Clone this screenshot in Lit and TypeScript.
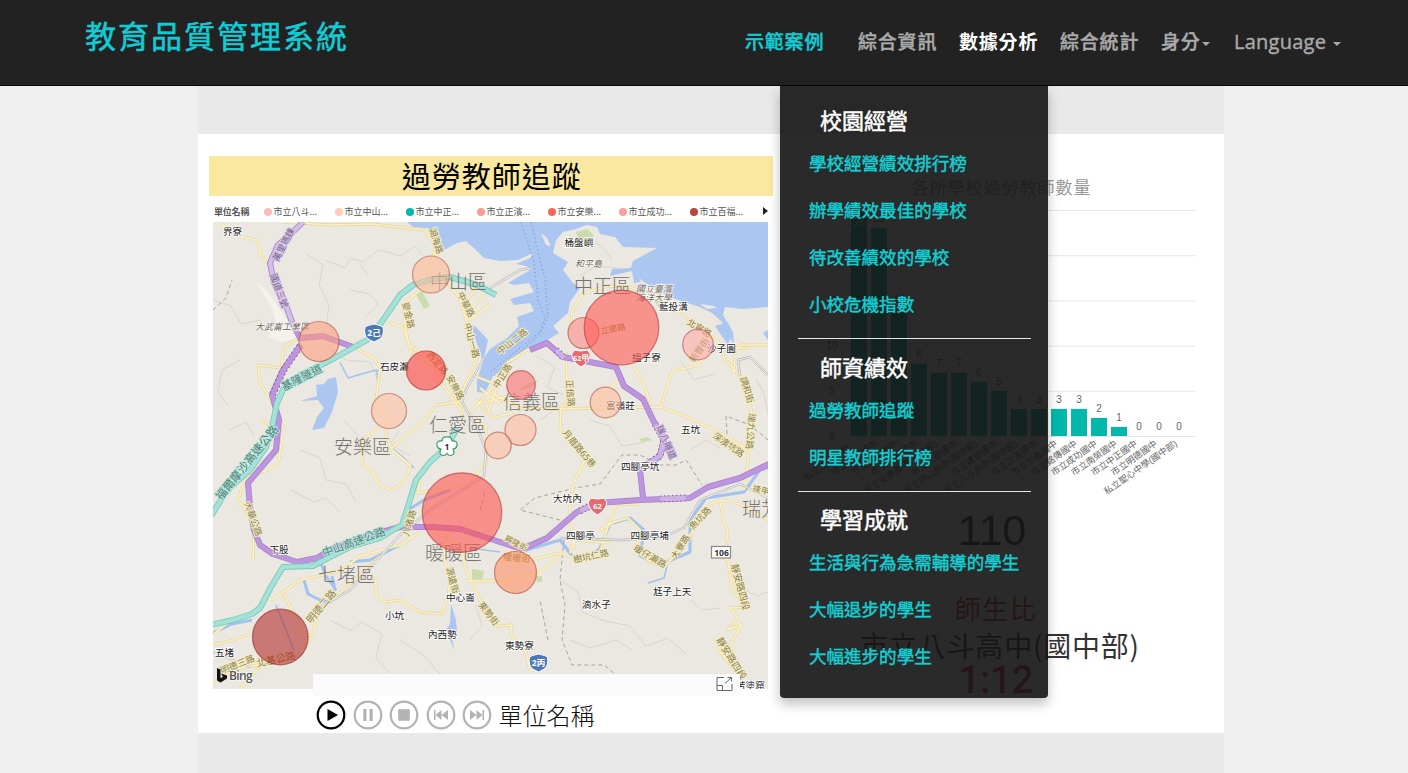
import { LitElement, html, svg, css } from "lit";
import { customElement } from "lit/decorators.js";

const legend: [string, string][] = [
  ["市立八斗", "#fbbcb9"],
  ["市立中山", "#fdcdb5"],
  ["市立中正", "#01b8aa"],
  ["市立正濱", "#f99c98"],
  ["市立安樂", "#fd625e"],
  ["市立成功", "#fba09c"],
  ["市立百福", "#b84540"],
];

const menu: { title: string; items: string[] }[] = [
  { title: "校園經營", items: ["學校經營績效排行榜", "辦學績效最佳的學校", "待改善績效的學校", "小校危機指數"] },
  { title: "師資績效", items: ["過勞教師追蹤", "明星教師排行榜"] },
  { title: "學習成就", items: ["生活與行為急需輔導的學生", "大幅退步的學生", "大幅進步的學生"] },
];

/* cx, cy, r, fill */
const bubbles: [number, number, number, string][] = [
  [431, 274.5, 18.5, "#ffb896"],
  [319, 341.5, 20, "#ff9c7c"],
  [426, 370.5, 19.5, "#ff3c3a"],
  [389, 411, 17.5, "#ffbfa2"],
  [583.5, 333, 15.5, "#ff8a88"],
  [621.5, 327.5, 37.3, "#ff5450"],
  [698, 344.5, 15.3, "#ffaaa8"],
  [521, 385, 14.3, "#fb6c6c"],
  [605.5, 402.5, 15.3, "#ffbb9c"],
  [520.5, 430, 15.5, "#ffbb9c"],
  [498, 445.5, 13.3, "#ffbb9c"],
  [462, 512.5, 39.7, "#ff4f4c"],
  [515.5, 572.5, 21, "#ff8e62"],
  [280.3, 637, 27.8, "#b2282a"],
];

const districts: [number, number, string][] = [
  [430, 289, "中山區"],
  [574, 293, "中正區"],
  [334, 454, "安樂區"],
  [429, 432, "仁愛區"],
  [503, 409, "信義區"],
  [425, 560, "暖暖區"],
  [318, 582, "七堵區"],
  [742, 516, "瑞芳區"],
];

const places: [number, number, string][] = [
  [223, 235, "界寮"],
  [564.5, 246, "桶盤嶼"],
  [659, 310, "藍投溝"],
  [380, 369.5, "石皮瀨"],
  [632, 360.5, "搵子寮"],
  [707, 352, "沙子園"],
  [606, 408.5, "富嶺莊"],
  [681, 432.5, "五坑"],
  [621, 469.5, "四腳亭坑"],
  [553, 501.5, "大坑內"],
  [566, 538.5, "四腳亭"],
  [630.5, 538.5, "四腳亭埔"],
  [653, 594.5, "尪子上天"],
  [582, 607.5, "滴水子"],
  [505, 649, "東勢寮"],
  [446, 601, "中心崙"],
  [385, 618.5, "小坑"],
  [428, 637.5, "內西勢"],
  [269.5, 552.5, "下股"],
  [215, 655.5, "五堵"],
  [736, 689, "苦塗窟"],
];

/* x, y, angle, text, size, and a halo class for highways */
const roadNames: [number, number, number, string, number, string?][] = [
  [278, 262, -62, "萬里瑪鍊", 9, "violet"],
  [270, 275, 70, "國道三號", 9, "violet"],
  [284, 391, -27, "基隆隧道", 11, "mint"],
  [221, 501, -51, "福爾摩沙高速公路", 11.5, "mint"],
  [324, 557, -20, "中山高速公路", 11, "mint"],
  [429, 229, 72, "湖海路", 9],
  [457, 294, 63, "中華路", 9],
  [464, 324, 75, "中山一路", 9],
  [402, 303, 76, "麥金路", 9],
  [446, 377, 62, "安樂路", 9],
  [426, 355, 48, "西定路", 9],
  [498, 389, -58, "中正路", 9],
  [566, 380, 85, "正信路", 9],
  [562, 433, 50, "月眉路65巷", 9],
  [656, 427, 66, "瑞八隧道", 9, "violet"],
  [740, 378, 73, "調和街", 9],
  [749, 413, 95, "瑞九公路", 9],
  [712, 437, 35, "深澳坑路", 9],
  [693, 530, -46, "魚坑路", 9],
  [633, 550, 30, "暖仔瀨路", 9],
  [676, 560, -58, "大寮路", 9],
  [574, 563, -12, "樹坑仁路", 9],
  [731, 565, 75, "靜安路四段", 9.5],
  [716, 640, 58, "靜安路四段", 9.5],
  [504, 540, 28, "興隆街", 8],
  [503, 560, 5, "暖暖街", 9],
  [478, 605, 52, "東勢街", 9],
  [446, 568, 75, "源遠街", 9],
  [409, 537, -75, "八堵路", 9],
  [311, 624, -50, "明德二路", 10],
  [257, 667, -12, "北基公路", 10],
  [222, 674, -22, "明德三路", 9],
  [244, 503, 70, "大華公路", 9],
  [601, 334, -10, "立德路", 8.5],
  [686, 324, 30, "北寧路", 9],
  [694, 363, -55, "新豐街", 9],
  [500, 355, -38, "中山二路", 9],
  [752, 491, 14, "逢甲路", 8.5],
];

const yellowRoads = [
  "M222 224 L238 236 L257 240 L261 256 L268 263",
  "M283 222 L330 225 L370 224 L425 230 L436 246 L430 268 L428 284 L408 300 L404 322 L410 350 L420 360 L432 370 L448 392 L459 408 L464 420",
  "M389 322 L402 327 L406 336 L410 346 L425 356 L446 377",
  "M448 284 L460 298 L466 320 L472 344 L477 358 L463 390 L458 402 L470 414 L486 428 L487 446 L486 466",
  "M486 290 L466 318 M478 286 L466 302 M490 304 L470 320",
  "M532 347 L508 362 L495 384 L480 402 L470 412",
  "M495 384 L475 376 M508 396 L478 404 M503 406 L480 388 M515 412 L493 418 L476 400 M496 390 L488 412",
  "M490 392 L520 408 L560 409 L600 408 L660 407 L680 414 L715 430 L742 446 L746 452",
  "M566 352 L567 380 L568 400 L561 408 L560 430 L584 450 L585 460 L575 480 L570 500 L570 520 L574 548",
  "M633 366 L642 380 L648 396 L650 404",
  "M661 407 L672 371 L696 366 L714 350 L735 348 L750 348",
  "M570 336 L572 312 L582 294 L608 286 L630 287 L670 302 L700 330 L718 340 L724 358 L740 376 L752 412 L748 460 L744 490",
  "M597 405 L605 392 L617 382 L624 378",
  "M260 420 L280 430 L282 440 L278 465 L268 470 L246 477",
  "M300 337 L284 347 L281 368 L258 365 L260 382 L272 403 L284 429",
  "M353 347 L374 358 L380 368 L376 400 L388 420",
  "M385 423 L363 440 L362 465 L372 472 L380 486 L392 490 L401 484 L408 474 L410 465 L392 450 L386 436 L387 420",
  "M392 448 L425 420 L436 405 L458 402",
  "M415 474 L420 480 L418 493 L440 490 L470 484 L487 460",
  "M245 480 L238 500 L248 514 L254 530 L253 560",
  "M267 597 L272 600 L300 580 L318 576 L342 570 L360 556 L400 545 L420 532",
  "M284 594 L296 618 L302 634 L313 636 L318 610 L340 593 L380 556",
  "M376 577 L376 596 L386 602 L400 600 L420 612 L442 614 L448 596 L450 580 L445 560 L443 540",
  "M213 683 L240 668 L275 662 L300 654 L310 640",
  "M213 645 L234 640 L250 634 M213 635 L226 624 M240 689 L262 664",
  "M430 528 L460 545 L466 570 L480 600 L496 626 L511 625 L512 637 L526 652 L530 672",
  "M466 581 L495 581 M496 582 L540 572 L560 556",
  "M500 560 L530 560 L560 553 L580 560 L600 552 L610 520 L617 504 L640 504",
  "M570 553 L575 540 L610 543 M600 530 L614 522 L628 518 L640 530 L636 550 L650 560",
  "M633 546 L650 562 L666 565 L680 550 L695 528 L710 504 L722 500 L740 504 L768 520",
  "M720 500 L724 524 L728 530 L726 546 L718 556 L728 560 L732 590 L748 607 L730 608 L738 618 L728 630 L742 624 L730 645 L733 650 L722 642 L718 650 L740 676",
  "M768 345 L742 345 L735 350 L734 375",
];

const contours = [
  "M305 253 l18 12 l-4 20 l10 20 l-3 22 l14 10",
  "M325 260 l20 8 l6 -10 l12 4 l16 -12 l22 6 l14 -10 l8 10",
  "M213 300 l18 6 l10 18 l20 -4",
  "M350 290 l20 4 l8 10 l-12 12 M360 265 l8 10",
  "M240 360 l-18 10 l-4 22 l10 14 M230 430 l16 -8 l8 14",
  "M300 450 l20 8 l6 22 l20 4 l10 18 M290 490 l24 12 l12 -4 l14 14",
  "M330 350 l16 10 l24 2 l8 18",
  "M400 430 l-10 14 l20 12 M344 420 l14 16",
  "M330 620 l20 10 l12 -8 l20 12 l-6 24 l14 16",
  "M400 640 l22 14 l18 20 M470 640 l12 -14 l-6 -20",
  "M560 580 l18 12 l4 20 l20 8 M570 640 l20 8 l26 -8 l16 10",
  "M600 620 l30 6 l16 20 l22 -8 l18 16 M690 600 l12 10 l18 -2 M745 590 l12 6 l11 -4",
  "M590 420 l20 6 l12 20 l24 -4 M690 450 l16 -10 l14 8",
  "M535 355 l20 12 l-8 20 l16 8 M540 420 l12 -8",
  "M680 360 l14 20 l20 -6 M756 378 l8 16 l4 20",
  "M588 240 l14 6 l10 14 M580 276 l16 -10 l22 2",
];

const p = (d: string, stroke: string, w: number, extra = "") =>
  svg`<path d=${d} fill="none" stroke=${stroke} stroke-width=${w} stroke-linejoin="round" stroke-dasharray=${extra || "none"}></path>`;

const streams =
  "M340 362 L348 378 L365 373 L377 370 L378 388 M392 448 L404 458 L414 468 M276 605 L284 625 L294 650 M668 562 L664 578 L648 583 M500 552 L470 548";
const rivers =
  "M213 633 L232 624 L252 620 M304 580 L308 594 L320 600 L330 602 L335 590 L332 576 M318 556 L326 576 L336 590 M400 545 L370 560 L350 562 M408 510 L424 500 L450 490 M520 552 L560 540 L572 556 L590 558 L600 548 L610 524 L630 518 L644 530 L640 556 L660 565 L690 552 L690 520 L706 498 L744 492 L760 470 L768 468";
const rails =
  "M484 358 L466 390 L462 402 L478 430 L486 450 L484 476 L430 510 L400 535 L350 590 L316 610 M532 268 L520 270 L490 288 M560 538 L620 540 L660 538 L684 528 L700 500 L740 484 L768 498 M740 376 L738 360 L750 357 L768 375 M213 652 L250 667";
const tealRoads =
  "M496 295 L477 285 L450 277 L433 279 L413 285 L400 295 L390 310 L376 330 L367 340 L340 355 L323 364 L300 375 L284 388 L277 403 L272 427 L266 447 L250 470 L227 490 L211 516 M457 428 L447 447 L430 462 L416 480 L409 503 L402 525 L393 530 L380 538 L350 547 L328 558 L313 566 L283 567 L271 587 L260 608 L252 614 L233 620 L211 625";
const purpleRoads =
  "M303 222 L291 234 L278 245 L270 263 L274 283 L284 300 L292 322 L301 340 M301 345 L283 370 L272 395 L279 420 L276 450 L248 483 L250 507 L254 530 L260 545 L273 554 L297 562 L317 558 L333 548 L367 536 L400 527 L433 527 L460 529 L500 542 L522 549 L547 538 L577 512 L597 503 L640 500 L690 498 L708 487 L740 478 L769 464 M300 338 L323 336 L353 347 M530 350 L547 343 L563 357 L590 362 L616 367 L624 386 L643 399 L653 420 L664 440 L660 456 L640 470 L643 498";
const tunnels = "M655 424 L664 440 L660 456 L646 465 M660 499 L686 498 M556 350 L564 358 M580 511 L590 506";

@customElement("teacher-map")
export class TeacherMap extends LitElement {
  static styles = css`
    :host { display: block; }
    svg { display: block; font-family: "Noto Sans CJK TC", sans-serif; }
    .district { font-size: 19px; font-weight: 300; fill: #75736f; }
    .place { font-size: 9.6px; fill: #222; stroke: #fff; stroke-width: 1.6px; paint-order: stroke; }
    .road { fill: #857e5c; stroke: #f8eec0; stroke-width: 1.8px; paint-order: stroke; }
    .mint { fill: #4f7f78; stroke: #b9e8dd; }
    .violet { fill: #76608f; stroke: #dccbea; }
    .park { font-size: 9px; font-style: italic; fill: #6b6256; stroke: #fff; stroke-width: 1.2px; paint-order: stroke; }
    .shield { font: bold 8.5px "Open Sans", "Noto Sans CJK TC", sans-serif; fill: #fff; text-anchor: middle; }
    .dark { fill: #333; }
    .bing { font: 600 12px "Open Sans", sans-serif; fill: #555; letter-spacing: -0.6px; stroke: #fff; stroke-width: 1px; paint-order: stroke; }
  `;

  render() {
    return html`<svg width="555" height="467" viewBox="213 222 555 467">
      <rect x="213" y="222" width="555" height="467" fill="#ebe8e1"></rect>
      <path d="M256 282 L266 290 L282 312 L290 328 L284 340 L268 338 L276 322 L272 308 Z M268 330 L290 326 L304 338 L280 342 Z" fill="#f5f2ec"></path>
      <path fill="#abc6f1" d="M407 222 L413 227 L428 228 L436 236 L444 250 L457 243 L466 241 L475 249 L484 258 L500 261 L518 260 L533 253 L530 258 L516 264 L526 266 L532 269 L508 283 L514 285 L529 283 L534 292 L510 299 L514 305 L530 303 L534 311 L517 317 L519 326 L507 338 L490 349 L484 358 L488 340 L475 326 L472 328 L479 350 L483 362 L477 380 L477 392 L485 393 L493 376 L531 347 L546 341 L559 333 L553 326 L568 313 L570 302 L580 288 L573 283 L563 270 L568 262 L553 253 L556 240 L563 232 L576 229 L587 225 L597 227 L600 234 L615 237 L623 247 L657 248 L633 261 L631 268 L612 269 L610 276 L632 271 L634 283 L641 282 L634 266 L640 279 L650 286 L670 297 L687 303 L700 307 L712 313 L722 322 L728 335 L734 344 L733 332 L723 315 L725 307 L743 309 L768 307 L768 222 Z"></path>
      <path fill="#ebe8e1" d="M541 233 L547 238 L551 246 L546 245 Z M700 304 l14 2 l3 2 l-10 1 Z"></path>
      <path fill="#abc6f1" d="M715 326 L728 322 L732 334 L728 345 Z M763 333 l5 -3 v10 Z M300 401 L317 396 L316 385 L324 384 L328 379 L336 377 L338 392 L332 412 L324 428 L312 430 L317 417 L324 408 L318 400 Z M451 604 L456 620 L457 632 L452 636 L454 650 L448 634 L444 632 L450 624 Z"></path>
      <path fill="#cbdcae" d="M576 232 L588 229 L594 236 L590 240 L578 238 Z M472 569 l12 2 l-2 9 l-10 -1 Z M639 439 l8 -2 l5 3 l-10 2 Z M416 294 l6 -3 l8 15 l-6 3 Z M535 576 l7 0 v6 h-5 Z M520 388 l12 -6 l6 -2 l-4 6 l-12 4 Z M654 300 l12 2 l10 10 l-16 -2 Z"></path>
      ${contours.map((d) => p(d, "#dad6ce", 1))}
      ${p(streams, "#a3c2ee", 1.6)}
      ${p(rivers, "#a3c2ee", 3)}
      ${p("M213 310 L226 298 L232 280 M480 510 L485 492 M548 640 L540 600 M560 520 L520 510 L535 498 L575 488 L600 484 L622 455 L640 455 L660 465 L676 465 L686 460 L702 485 M564 540 L560 580 L565 605 L562 640 L572 665 L604 665 L620 678 M768 440 L750 425 L726 416 L727 434", "#a8a49c", 1, "4 3")}
      ${p("M521 222 L534 262 L538 300 L545 318 L540 332 L490 372 M531 222 L545 280 L548 316 L540 334 L494 376", "#7ba0df", 1, "1.5 2.5")}
      ${yellowRoads.map((d) => p(d, "#e6d59a", 2.8))}
      ${yellowRoads.map((d) => p(d, "#fbf1c6", 1.7))}
      ${p(rails, "#b3b2b6", 2.4)}
      ${p(rails, "#eeeeee", 1.2)}
      ${p(purpleRoads, "#a582cc", 6)}${p(purpleRoads, "#bd95de", 4.5)}
      ${p("M303 222 L291 234 L278 245 L270 263 L274 283 L284 300 L292 322", "#d5bfe6", 4)}
      ${p(tunnels, "#8264a8", 7, "1.5 2.5")}
      ${p(tunnels, "#cdb0e6", 5)}
      ${p("M300 346 L283 371 L272 396", "#7d62a0", 7, "2 2.5")}${p("M300 346 L283 371 L272 396", "#bd95de", 5)}
      ${p(tealRoads, "#7fc7bc", 6)}${p(tealRoads, "#a3e3d7", 4.2)}
      ${roadNames.map(([x, y, a, s, f, k]) => svg`<text class="road ${k ?? ""}" x=${x} y=${y} font-size=${f} transform="rotate(${a} ${x} ${y})">${s}</text>`)}
      <text class="park" x="255" y="330">大武崙工業區</text>
      <text class="park" x="575" y="267">和平島</text>
      <text class="park" x="636" y="292">國立臺灣</text>
      <text class="park" x="636" y="301">海洋大學</text>
      ${districts.map(([x, y, s]) => svg`<text class="district" x=${x} y=${y}>${s}</text>`)}
      ${places.map(([x, y, s]) => svg`<text class="place" x=${x} y=${y}>${s}</text>`)}
      ${[[374, 333, "2己"], [538.5, 663, "2丙"]].map(
        ([x, y, s]) => svg`<g transform="translate(${x} ${y})"><path d="M-6 -7.5 Q0 -10.5 6 -7.5 L9 -6 Q10.5 2 6 6 L0 9 L-6 6 Q-10.5 2 -9 -6 Z" fill="#4f78b8" stroke="#fff" stroke-width="1"></path><text class="shield" y="3">${s}</text></g>`
      )}
      ${[[581, 358, "62甲"], [597.5, 506, "62"]].map(
        ([x, y, s]) => svg`<g transform="translate(${x} ${y})"><path d="M-6.5 -8 Q0 -6 6.5 -8 L9.3 -4 Q9 4 0 9 Q-9 4 -9.3 -4 Z" fill="#e56b70" stroke="#fff" stroke-width="1"></path><text class="shield" y="2.5" style="font-size:7.5px">${s}</text></g>`
      )}
      <g transform="translate(447 446.5)">
        <path d="M0 -9.5 Q5 -10 5 -5.5 Q11 -6 10 -1 Q9 2.5 6 2.5 Q9 8 4 9 Q1 9 0 7 Q-1 9 -4 9 Q-9 8 -6 2.5 Q-9 2.5 -10 -1 Q-11 -6 -5 -5.5 Q-5 -10 0 -9.5 Z" fill="#fff" stroke="#3c9b69" stroke-width="1.2"></path>
        <text class="shield dark" y="3">1</text>
      </g>
      <rect x="711.5" y="546.5" width="19" height="11.5" fill="#fff" stroke="#888" stroke-width="1.2"></rect>
      <text class="shield dark" x="721.5" y="555.5">106</text>
      ${bubbles.map(([x, y, r, c]) => svg`<circle cx=${x} cy=${y} r=${r} fill=${c} fill-opacity=".58"></circle><circle cx=${x} cy=${y} r=${r} fill="none" stroke=${c} stroke-opacity=".35" stroke-width="1.2"></circle><circle cx=${x} cy=${y} r=${r} fill="none" stroke="#8a3030" stroke-opacity=".42" stroke-width="1.2"></circle>`)}
      <path d="M217 668 L220.5 669.5 V678 L223 677 L221 673.5 L227 675.5 V678.5 L220.5 682.5 L217 680.5 Z" fill="#111"></path>
      <text class="bing" x="229" y="680">Bing</text>
    </svg>`;
  }
}

const values = [25, 23, 14, 8, 7, 7, 6, 5, 3, 3, 3, 3, 2, 1, 0, 0, 0];
const schools = [
  "私立二信中學…", "市立碇內國中", "市立武崙國中", "市立百福國中", "市立安樂高中(國中部)", "市立大德國中",
  "市立中山高中(國中部)", "市立建德國中", "市立八斗高中(國中部)", "市立正濱國中", "市立信義國中", "市立銘傳國中",
  "市立成功國中", "市立南榮國中", "市立中正國中", "市立明德國中", "私立聖心中學(國中部)",
];

@customElement("teacher-chart")
export class TeacherChart extends LitElement {
  static styles = css`
    :host { display: block; }
    svg { display: block; font-family: "Liberation Sans", "Noto Sans CJK TC", sans-serif; }
    .num { font-size: 10px; fill: #666; text-anchor: middle; }
    .inside { fill: #ddd; }
    .name { font-size: 9px; fill: #666; text-anchor: end; }
  `;
  render() {
    return html`<svg width="428" height="304" viewBox="782 200 428 304">
      ${[0, 1, 2, 3, 4, 5].map((i) => svg`<rect x="845" y=${436 - i * 45.2} width="350" height="1" fill="#e6e6e6"></rect><text class="num" x="832" y=${439.5 - i * 45.2}>${i * 5}</text>`)}
      ${values.map((v, i) => {
        const x = 859 + i * 20;
        return svg`<rect x=${x - 8} y=${436 - v * 9.04} width="16" height=${v * 9.04} fill="#01b8aa"></rect>
          <text class="num ${i === 0 ? "inside" : ""}" x=${x} y=${i === 0 ? 226 : 430 - v * 9.04}>${v}</text>
          <text class="name" x=${x - 1} y="445" transform="rotate(-35 ${x - 1} 445)">${schools[i]}</text>`;
      })}
    </svg>`;
  }
}

@customElement("app-root")
export class AppRoot extends LitElement {
  static styles = css`
    :host {
      display: block; height: 773px; overflow: hidden; background: #efefef; position: relative;
      font-family: "Noto Sans CJK TC", sans-serif;
    }
    .nav { box-sizing: border-box; height: 86px; background: #222; border-bottom: 1px solid #080808; display: flex; justify-content: space-between; padding: 0 50px 0 85px; }
    .brand { font-size: 31px; letter-spacing: 2px; line-height: 70px; color: #13cbd5; -webkit-text-stroke: .5px #13cbd5; white-space: nowrap; }
    .links { display: grid; grid-template-columns: 113px 101px 101px 101px 73px 124px; font: 500 19px/84px "Open Sans", "Noto Sans CJK TC", sans-serif; letter-spacing: .8px; color: #aaa; -webkit-text-stroke: .4px currentColor; white-space: nowrap; }
    .links .lang { font-size: 20px; letter-spacing: .25px; }
    .links .teal { color: #13cbd5; }
    .links .active { color: #fff; font-weight: 700; -webkit-text-stroke: 0; }
    .caret { display: inline-block; border: 4px solid transparent; border-top-color: currentColor; border-bottom: 0; vertical-align: middle; margin-left: 1px; }
    .lang .caret { margin-left: 7px; }
    .container { width: 1026px; height: 687px; margin-left: 198px; padding-top: 48px; box-sizing: border-box; background: #e9e9e9; }
    .panel { box-sizing: border-box; height: 599px; background: #fff; display: grid; grid-template-columns: 563.5px 428px; column-gap: 9.5px; padding: 22px 0 0 11px; }
    .title { height: 39.5px; line-height: 39px; background: #fae8a0; text-align: center; font-size: 29px; letter-spacing: 1px; text-indent: 2px; color: #000; }
    .legend { display: grid; grid-template-columns: 49.5px repeat(7, 71px); padding-left: 5px; height: 26.5px; font-size: 9px; line-height: 31px; color: #555; white-space: nowrap; position: relative; }
    .legend b { letter-spacing: -.2px; font-size: 9px; }
    .key { display: flex; align-items: center; gap: 2px; }
    .dot { width: 8px; height: 8px; border-radius: 50%; margin-top: 1px; }
    .next { position: absolute; left: 554px; top: 11px; border: 4.5px solid transparent; border-left: 5px solid #222; border-right: 0; }
    .mapwrap { margin-left: 4px; position: relative; width: 555px; }
    .strip { position: absolute; left: 100px; top: 452px; width: 427px; height: 22px; background: #fafafa; display: flex; justify-content: flex-end; }
    .strip svg { margin: 2px 7px 0 0; }
    .player { display: flex; align-items: center; gap: 6.5px; padding: 11px 0 0 107px; height: 30px; }
    .player svg { display: block; }
    .player span { font-size: 24px; font-weight: 300; line-height: 30px; color: #111; margin-left: 0; }
    .right { display: flex; flex-direction: column; align-items: center; }
    .ctitle { height: 44px; line-height: 61px; font-size: 17px; letter-spacing: 1px; color: #999; padding-left: 11px; }
    .count { font: 43px/52px "Liberation Sans", sans-serif; color: #333; margin-right: 8px; }
    .ratio { font-size: 26px; letter-spacing: 1.5px; line-height: 52px; margin-top: 26px; color: #c0302c; }
    .school { font-size: 28px; line-height: 32px; letter-spacing: .8px; margin-left: 8px; margin-top: -5px; color: #333; white-space: nowrap; }
    .big { font: 500 38px/38px Roboto, sans-serif; color: #c0302c; }
    .menu { position: absolute; left: 780px; top: 86px; width: 268px; height: 612px; box-sizing: border-box; background: rgba(20, 20, 20, .905); border-radius: 0 0 4px 4px; box-shadow: 0 6px 12px rgba(0, 0, 0, .25); padding: 11px 17px 0 18px; white-space: nowrap; }
    .group { padding-bottom: 11px; }
    .group + .group { border-top: 1px solid #e5e5e5; padding-top: 5px; }
    .group:last-child { padding-top: 4px; }
    .head { font-size: 22px; line-height: 45px; height: 42px; padding-left: 22px; color: #fff; -webkit-text-stroke: .5px #fff; }
    .item { font-size: 17.55px; line-height: 47px; height: 47px; padding-left: 11px; color: #13cfd4; -webkit-text-stroke: .45px #13cfd4; }
  `;

  private button(kind: string) {
    const icons: Record<string, string> = {
      play: "M11.5 9 L22 15 L11.5 21 Z",
      pause: "M10.3 9 h3.2 v12 h-3.200 Z M16.500 9 h3.200 v12 h-3.200 Z",
      stop: "M9.200 9.200 h11.600 v11.600 h-11.600 Z",
      prev: "M8 10 h1.500 v10 h-1.500 Z M15.500 10 V20 L9.500 15 Z M22 10 V20 L15.500 15 Z",
      next: "M20.500 10 h1.500 v10 h-1.500 Z M14.500 10 V20 L20.500 15 Z M8 10 V20 L14.500 15 Z",
    };
    const c = kind === "play" ? "#000" : "#b3b3b3";
    return html`<svg width="30" height="30" viewBox="0 0 30 30"><circle cx="15" cy="15" r="13.3" fill="none" stroke=${c} stroke-width="2.2"></circle><path d=${icons[kind]} fill=${c}></path></svg>`;
  }

  render() {
    return html`
      <nav class="nav">
        <div class="brand">教育品質管理系統</div>
        <div class="links">
          <span class="teal">示範案例</span><span>綜合資訊</span><span class="active">數據分析</span><span>綜合統計</span>
          <span>身分<i class="caret"></i></span><span class="lang">Language<i class="caret"></i></span>
        </div>
      </nav>
      <main class="container">
        <div class="panel">
          <section>
            <div class="title">過勞教師追蹤</div>
            <div class="legend">
              <b>單位名稱</b>
              ${legend.map(([n, c]) => html`<span class="key"><i class="dot" style="background:${c}"></i>${n}...</span>`)}
              <i class="next"></i>
            </div>
            <div class="mapwrap">
              <teacher-map></teacher-map>
              <div class="strip">
                <svg width="17" height="16" viewBox="0 0 17 16" fill="none" stroke="#666" stroke-width="1">
                  <path d="M8 1.5 H1 V14.5 H16 V8 M1 9.5 H6.5 V14.5 M9 7.5 L15.5 1.5 M11.5 1.5 H15.5 V5.5"></path>
                </svg>
              </div>
            </div>
            <div class="player">
              ${["play", "pause", "stop", "prev", "next"].map((k) => this.button(k))}
              <span>單位名稱</span>
            </div>
          </section>
          <section class="right">
            <div class="ctitle">各所學校過勞教師數量</div>
            <teacher-chart></teacher-chart>
            <div class="count">110</div>
            <div class="ratio">師生比</div>
            <div class="school">市立八斗高中(國中部)</div>
            <div class="big">1:12</div>
          </section>
        </div>
      </main>
      <div class="menu">
        ${menu.map((g) => html`<div class="group"><div class="head">${g.title}</div>${g.items.map((i) => html`<div class="item">${i}</div>`)}</div>`)}
      </div>
    `;
  }
}
